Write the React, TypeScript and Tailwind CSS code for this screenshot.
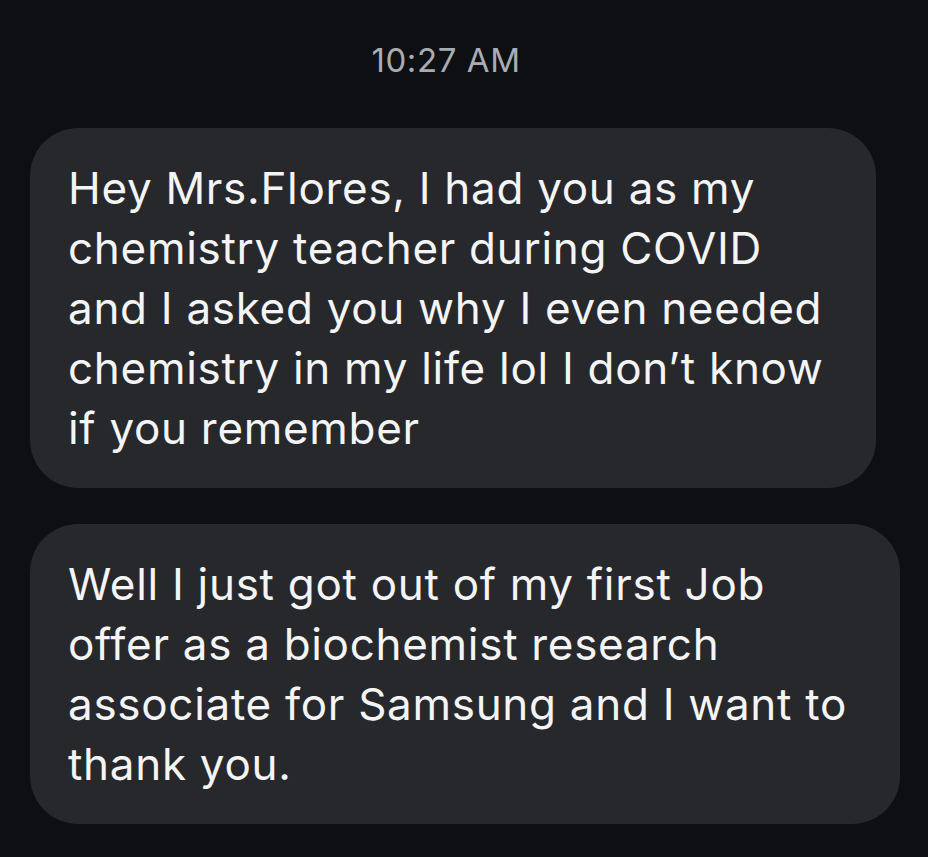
const messages: { id: number; lines: string[]; width: string }[] = [
  {
    id: 1,
    width: "w-[846px]",
    lines: [
      "Hey Mrs.Flores, I had you as my",
      "chemistry teacher during COVID",
      "and I asked you why I even needed",
      "chemistry in my life lol I don’t know",
      "if you remember",
    ],
  },
  {
    id: 2,
    width: "w-[870px]",
    lines: [
      "Well I just got out of my first Job",
      "offer as a biochemist research",
      "associate for Samsung and I want to",
      "thank you.",
    ],
  },
];

const App = () => {
  return (
    <div className="w-[928px] h-[857px] bg-[#0d0f13] overflow-hidden font-['Inter','Roboto',sans-serif]">
      <div className="pt-[40px] pr-[36px] text-center text-[33px] leading-[40px] text-[#a9acb2] tracking-[0.6px]">
        10:27 AM
      </div>
      <div className="flex flex-col gap-[36px] pl-[30px] pt-[48px]">
        {messages.map((m) => (
          <div
            key={m.id}
            className={`${m.width} bg-[#26282c] rounded-[48px] pl-[38px] pr-4 py-[30px] text-[44px] leading-[60px] text-[#f4f4f5] tracking-[0.7px]`}
          >
            {m.lines.map((line, i) => (
              <div key={i} className="whitespace-nowrap">
                {line}
              </div>
            ))}
          </div>
        ))}
      </div>
    </div>
  );
};

export default App;
